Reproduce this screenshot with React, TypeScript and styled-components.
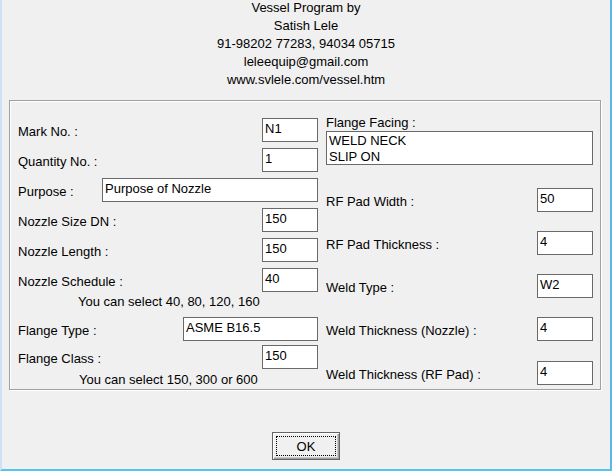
import React from 'react'
import styled, { createGlobalStyle } from 'styled-components';

const Global = createGlobalStyle`
  html, body {
    margin: 0;
    padding: 0;
    background: #f0f0f0;
  }
  body {
    font-family: "Liberation Sans", Arial, sans-serif;
    font-size: 13px;
    color: #000;
  }
`;

const Frame = styled.div`
  box-sizing: border-box;
  width: 612px;
  height: 471px;
  display: flex;
  flex-direction: column;
  background: #f0f0f0;
  border-left: 2px solid #cfe1f4;
  border-right: 2px solid #5db6e6;
  border-bottom: 2px solid #52c6ee;
`;

const Header = styled.div`
  display: flex;
  flex-direction: column;
  align-items: center;
  line-height: 18px;
  height: 90px;
  margin-top: -1px;
`;

const GroupBox = styled.div`
  box-sizing: border-box;
  width: 592px;
  height: 290px;
  margin: 11px 0 0 7px;
  padding-left: 8px;
  display: flex;
  gap: 8px;
  border: 1px solid #a0a0a0;
  box-shadow: inset 1px 1px 0 #fff, 1px 1px 0 #fff;
`;

const Column = styled.div<{ $w: number; $pt: number }>`
  width: ${p => p.$w}px;
  padding-top: ${p => p.$pt}px;
  display: flex;
  flex-direction: column;
`;

const Row = styled.div<{ $mt?: number }>`
  display: flex;
  justify-content: space-between;
  align-items: center;
  height: 24px;
  margin-top: ${p => p.$mt ?? 6}px;
`;

const Label = styled.span`
  padding-top: 4px;
  line-height: 16px;
  white-space: nowrap;
`;

const Field = styled.div<{ $w?: number }>`
  box-sizing: border-box;
  width: ${p => p.$w ?? 56}px;
  height: 24px;
  padding: 0 2px;
  line-height: 20px;
  background: #fff;
  border: 1px solid #696969;
  white-space: nowrap;
`;

const Hint = styled.div<{ $indent: number; $mt: number }>`
  padding-left: ${p => p.$indent}px;
  margin-top: ${p => p.$mt}px;
  line-height: 16px;
`;

const FacingLabel = styled.div`
  line-height: 16px;
`;

const ListBox = styled.div`
  box-sizing: border-box;
  height: 34px;
  padding: 1px 2px;
  line-height: 16px;
  background: #fff;
  border: 1px solid #696969;
`;

const ButtonBar = styled.div`
  display: flex;
  justify-content: center;
  margin-top: 42px;
`;

const Button = styled.button`
  box-sizing: border-box;
  width: 68px;
  height: 28px;
  padding: 3px;
  display: flex;
  background: #f0f0f0;
  border: 1px solid #646464;
  box-shadow: inset 1px 1px 0 #fff, inset -1px -1px 0 #a0a0a0, inset -2px -2px 0 #c8c8c8;
  font-family: "Liberation Sans", Arial, sans-serif;
  font-size: 13px;
  color: #000;
`;

const Focus = styled.span`
  flex: 1;
  display: flex;
  align-items: center;
  justify-content: center;
  border: 1px dotted #000;
`;

const leftRows = [
  { label: 'Mark No. :', value: 'N1' },
  { label: 'Quantity No. :', value: '1' },
  { label: 'Purpose :', value: 'Purpose of Nozzle', w: 216 },
  { label: 'Nozzle Size DN :', value: '150' },
  { label: 'Nozzle Length :', value: '150' },
  { label: 'Nozzle Schedule :', value: '40' },
];

const rightRows = [
  { label: 'RF Pad Width :', value: '50', mt: 23 },
  { label: 'RF Pad Thickness :', value: '4', mt: 19 },
  { label: 'Weld Type :', value: 'W2', mt: 19 },
  { label: 'Weld Thickness (Nozzle) :', value: '4', mt: 19 },
  { label: 'Weld Thickness (RF Pad) :', value: '4', mt: 20 },
];

export default function App() {
  return <>
    <Global />
    <Frame>
      <Header>
        <div>Vessel Program by</div>
        <div>Satish Lele</div>
        <div>91-98202 77283, 94034 05715</div>
        <div>leleequip@gmail.com</div>
        <div>www.svlele.com/vessel.htm</div>
      </Header>

      <GroupBox>
        <Column $w={300} $pt={17}>
          {leftRows.map((r, i) => <Row key={r.label} $mt={i === 0 ? 0 : 6}>
            <Label>{r.label}</Label>
            <Field $w={r.w}>{r.value}</Field>
          </Row>)}
          <Hint $indent={60} $mt={2}>You can select 40, 80, 120, 160</Hint>
          <Row $mt={7}>
            <Label>Flange Type :</Label>
            <Field $w={135}>ASME B16.5</Field>
          </Row>
          <Row $mt={4}>
            <Label>Flange Class :</Label>
            <Field>150</Field>
          </Row>
          <Hint $indent={61} $mt={3}>You can select 150, 300 or 600</Hint>
        </Column>

        <Column $w={267} $pt={14}>
          <FacingLabel>Flange Facing :</FacingLabel>
          <ListBox>
            <div>WELD NECK</div>
            <div>SLIP ON</div>
          </ListBox>
          {rightRows.map(r => <Row key={r.label} $mt={r.mt}>
            <Label>{r.label}</Label>
            <Field>{r.value}</Field>
          </Row>)}
        </Column>
      </GroupBox>

      <ButtonBar>
        <Button><Focus>OK</Focus></Button>
      </ButtonBar>
    </Frame>
  </>
};
